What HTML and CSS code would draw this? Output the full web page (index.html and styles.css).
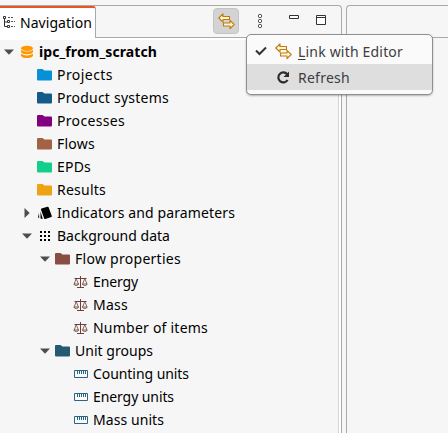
FILE: index.html
```html
<!DOCTYPE html>
<html lang="en">
<head>
<meta charset="utf-8">
<title>Navigation</title>
<link rel="stylesheet" href="styles.css">
</head>
<body>
<svg class="defs" width="0" height="0">
  <symbol id="folder" viewBox="0 0 16 14"><path fill="currentColor" d="M0 2Q0 1 1 1H5.5L7.5 2.5H14Q15 2.5 15 3.5V11.5Q15 12.5 14 12.5H1Q0 12.5 0 11.5Z"/></symbol>
  <symbol id="open" viewBox="0 0 10 6"><path fill="#4d4d4d" d="M0 .5H10L5 5.7Z"/></symbol>
  <symbol id="closed" viewBox="0 0 6 10"><path fill="#4d4d4d" d="M.5 0V10L5.7 5Z"/></symbol>
  <symbol id="scale" viewBox="0 0 16 14"><g fill="none" stroke="#6f4038"><path d="M1.5 3.5H13.5M7.5 1V12M4 12.5H11"/><path d="M3.2 3.5L1.2 9M3.2 3.5L5.4 9M11.8 3.5L9.6 9M11.8 3.5L14 9" stroke-width=".8"/><path d="M.8 9H5.7Q5.2 10.5 3.2 10.5T.8 9ZM9.3 9H14.2Q13.8 10.5 11.8 10.5T9.3 9Z" stroke-width=".8"/></g></symbol>
  <symbol id="ruler" viewBox="0 0 16 14"><path fill="#fbfbfb" stroke="#2b6480" d="M1.5 3.5H14.5V10.5H1.5Z"/><path stroke="#2b6480" d="M4.5 4V7M6.5 4V7M8.5 4V7M10.5 4V7M12.5 4V7"/></symbol>
  <symbol id="link" viewBox="0 0 17 17"><g fill="#fff6da" stroke="#bf7a0b" stroke-width="1.1" stroke-linejoin="round"><path d="M.8 5L5 .8V3.5H11.5V6.5H5V9.2Z"/><path d="M16.2 11.5L12 7.3V10H5.5V13H12V15.7Z"/></g></symbol>
</svg>
<div class="window">
  <section class="view">
    <header class="bar">
      <div class="tab">
        <svg width="12" height="12" viewBox="0 0 12 12"><path fill="none" stroke="#333" d="M1.5 2V10.5H4M1.5 6H4"/><path fill="#fff" stroke="#333" d="M.5.5H2.5V2.5H.5ZM4.5 4.5H6.5V6.5H4.5ZM4.5 9.5H6.5V11.5H4.5Z"/><path stroke="#555" stroke-dasharray="2 1" d="M5 1.5H11M8 5.5H12M8 10.5H12"/></svg>
        <span class="fit" data-width="72">Navigation</span>
      </div>
      <div class="tools">
        <span class="toggle"><svg width="17" height="17"><use href="#link"/></svg></span>
        <svg class="dots" width="6" height="16" viewBox="0 0 6 16"><g fill="#fff" stroke="#555"><circle cx="3" cy="3" r="1.7"/><circle cx="3" cy="8" r="1.7"/><circle cx="3" cy="13" r="1.7"/></g></svg>
        <svg class="min" width="10" height="4" viewBox="0 0 10 4"><path fill="#fff" stroke="#333" d="M.5.5H9.5V3.5H.5Z"/></svg>
        <svg class="max" width="10" height="10" viewBox="0 0 10 10"><path fill="#fff" stroke="#333" d="M.5.5H9.5V9.5H.5ZM.5 2.5H9.5"/></svg>
      </div>
    </header>
    <div class="tree">
      <div class="row"><span class="arrow"><svg width="10" height="6"><use href="#open"/></svg></span><svg class="icon" width="16" height="14" viewBox="0 0 16 14"><g fill="#ff9800"><ellipse cx="8" cy="3.3" rx="6" ry="2.6"/><path d="M2 5Q8 8.2 14 5V7Q13 9.2 8 9.2T2 7ZM2 8.8Q8 12 14 8.8V10.7Q13 13 8 13T2 10.7Z"/></g></svg><b class="fit" data-width="118">ipc_from_scratch</b></div>
      <div class="row l1"><span class="arrow"></span><svg class="icon blue" width="16" height="14"><use href="#folder"/></svg><span class="fit" data-width="56">Projects</span></div>
      <div class="row l1"><span class="arrow"></span><svg class="icon navy" width="16" height="14"><use href="#folder"/></svg><span class="fit" data-width="112">Product systems</span></div>
      <div class="row l1"><span class="arrow"></span><svg class="icon purple" width="16" height="14"><use href="#folder"/></svg><span class="fit" data-width="68">Processes</span></div>
      <div class="row l1"><span class="arrow"></span><svg class="icon brown" width="16" height="14"><use href="#folder"/></svg><span class="fit" data-width="38">Flows</span></div>
      <div class="row l1"><span class="arrow"></span><svg class="icon green" width="16" height="14"><use href="#folder"/></svg><span class="fit" data-width="34">EPDs</span></div>
      <div class="row l1"><span class="arrow"></span><svg class="icon amber" width="16" height="14"><use href="#folder"/></svg><span class="fit" data-width="49">Results</span></div>
      <div class="row l1"><span class="arrow"><svg width="6" height="10"><use href="#closed"/></svg></span><svg class="icon" width="16" height="14" viewBox="0 0 16 14"><path d="M4.5 2.5L10.5.7Q11.3.5 11.6 1.3L14.8 10Q15 10.8 14.3 11.1L8.3 13Q7.5 13.2 7.2 12.5L4 3.8Q3.8 2.8 4.5 2.5ZM3.5 5.5V12.5L5.8 13ZM2 7L1 11.5 2.2 12Z"/></svg><span class="fit" data-width="178">Indicators and parameters</span></div>
      <div class="row l1"><span class="arrow"><svg width="10" height="6"><use href="#open"/></svg></span><svg class="icon" width="16" height="14" viewBox="0 0 16 14"><path stroke="#000" stroke-width="2" stroke-dasharray="2 2" d="M3 3H13M3 7H13M3 11H13"/></svg><span class="fit" data-width="113">Background data</span></div>
      <div class="row l2"><span class="arrow"><svg width="10" height="6"><use href="#open"/></svg></span><svg class="icon maroon" width="16" height="14"><use href="#folder"/></svg><span class="fit" data-width="106">Flow properties</span></div>
      <div class="row l3"><span class="arrow"></span><svg class="icon" width="16" height="14"><use href="#scale"/></svg><span class="fit" data-width="45">Energy</span></div>
      <div class="row l3"><span class="arrow"></span><svg class="icon" width="16" height="14"><use href="#scale"/></svg><span class="fit" data-width="35">Mass</span></div>
      <div class="row l3"><span class="arrow"></span><svg class="icon" width="16" height="14"><use href="#scale"/></svg><span class="fit" data-width="115">Number of items</span></div>
      <div class="row l2"><span class="arrow"><svg width="10" height="6"><use href="#open"/></svg></span><svg class="icon teal" width="16" height="14"><use href="#folder"/></svg><span class="fit" data-width="78">Unit groups</span></div>
      <div class="row l3"><span class="arrow"></span><svg class="icon" width="16" height="14"><use href="#ruler"/></svg><span class="fit" data-width="96">Counting units</span></div>
      <div class="row l3"><span class="arrow"></span><svg class="icon" width="16" height="14"><use href="#ruler"/></svg><span class="fit" data-width="81">Energy units</span></div>
      <div class="row l3"><span class="arrow"></span><svg class="icon" width="16" height="14"><use href="#ruler"/></svg><span class="fit" data-width="71">Mass units</span></div>
    </div>
  </section>
  <section class="editor"><header class="editor-bar"></header></section>
</div>
<div class="menu">
  <div class="item"><svg class="check" width="12" height="10" viewBox="0 0 12 10"><path fill="none" stroke="#333" stroke-width="2" d="M1 4.5L4.5 8L11 1.5"/></svg><svg class="mark" width="17" height="17"><use href="#link"/></svg><span class="fit" data-width="105"><u>L</u>ink with Editor</span></div>
  <div class="item active"><span class="check"></span><svg class="mark" width="17" height="17" viewBox="0 0 17 17"><path fill="none" stroke="#2b2b2b" stroke-width="2.2" d="M12.2 5.2A5 5 0 1 0 12.6 11"/><path fill="#2b2b2b" d="M14 2.5V8H8.5Z"/></svg><span class="fit" data-width="52">Refresh</span></div>
</div>
<script src="fit.js"></script>
</body>
</html>
```
FILE: styles.css
```css
* { box-sizing: border-box; }
body { margin: 0; height: 433px; overflow: hidden; background: #f6f6f6; color: #000; font: 14px/23px "Noto Sans", "Open Sans", sans-serif; }
.defs { position: absolute; }
svg { flex: none; display: block; }
.window { display: flex; gap: 4px; height: 433px; padding-top: 5px; }
.view { width: 342px; border: 1px solid #aaa; border-width: 1px 1px 0 0; border-radius: 0 4px 0 0; display: flex; flex-direction: column; }
.bar { display: flex; height: 32px; flex: none; }
.tab { width: 96px; height: 32px; background: #fff; border-top: 2px solid #e95420; border-right: 1px solid #aaa; border-radius: 0 3px 0 0; display: flex; align-items: center; gap: 5px; padding: 0 0 2px 3px; flex: none; }
.tools { flex: 1; display: flex; border-bottom: 1px solid #aaa; padding-top: 2px; align-items: flex-start; }
.toggle { width: 26px; height: 26px; margin-left: 117px; border: 1px solid #c4c4c4; border-radius: 4px; background: #d3d3d3; display: flex; align-items: center; justify-content: center; }
.dots { margin: 5px 0 0 18px; }
.min { margin: 7px 0 0 26px; }
.max { margin: 7px 0 0 17px; }
.tree { flex: 1; border-top: 2px solid #fff; border-right: 2px solid #fff; box-shadow: inset -1px 0 #d5d5d5; overflow: hidden; }
.row { height: 23px; display: flex; align-items: center; white-space: pre; }
.l1 { padding-left: 18px; }
.l2 { padding-left: 36px; }
.l3 { padding-left: 54px; }
.arrow { width: 18px; flex: none; display: flex; justify-content: center; }
.icon { margin: 0 4px 0 1px; }
.fit { white-space: pre; display: inline-block; }
.blue { color: #0590d8; }
.navy { color: #155b8a; }
.purple { color: #800080; }
.brown { color: #a36243; }
.green { color: #12cf8c; }
.amber { color: #eda313; }
.maroon { color: #894e43; }
.teal { color: #265a72; }
.editor { flex: 1; border: 1px solid #aaa; border-width: 1px 0 0 1px; border-radius: 4px 0 0 0; }
.editor-bar { height: 32px; border-bottom: 1px solid #aaa; }
.menu { position: absolute; left: 246px; top: 34px; width: 187px; height: 61px; border: 1px solid #8f8f8f; border-radius: 5px; background: #fafafa; padding: 3px 0; box-shadow: 0 1px 2px #0004; color: #3d3d3d; }
.item { height: 26px; display: flex; align-items: center; padding-left: 8px; }
.active { background: #dedede; }
.check { width: 12px; }
.mark { margin: 0 6px 0 8px; }
u { text-underline-offset: 2px; text-decoration-skip-ink: none; }
```
FILE: fit.js
```js
document.querySelectorAll('.fit').forEach(function (el) {
  var extra = el.dataset.width - el.getBoundingClientRect().width;
  el.style.letterSpacing = extra / el.textContent.length + 'px';
});
```
